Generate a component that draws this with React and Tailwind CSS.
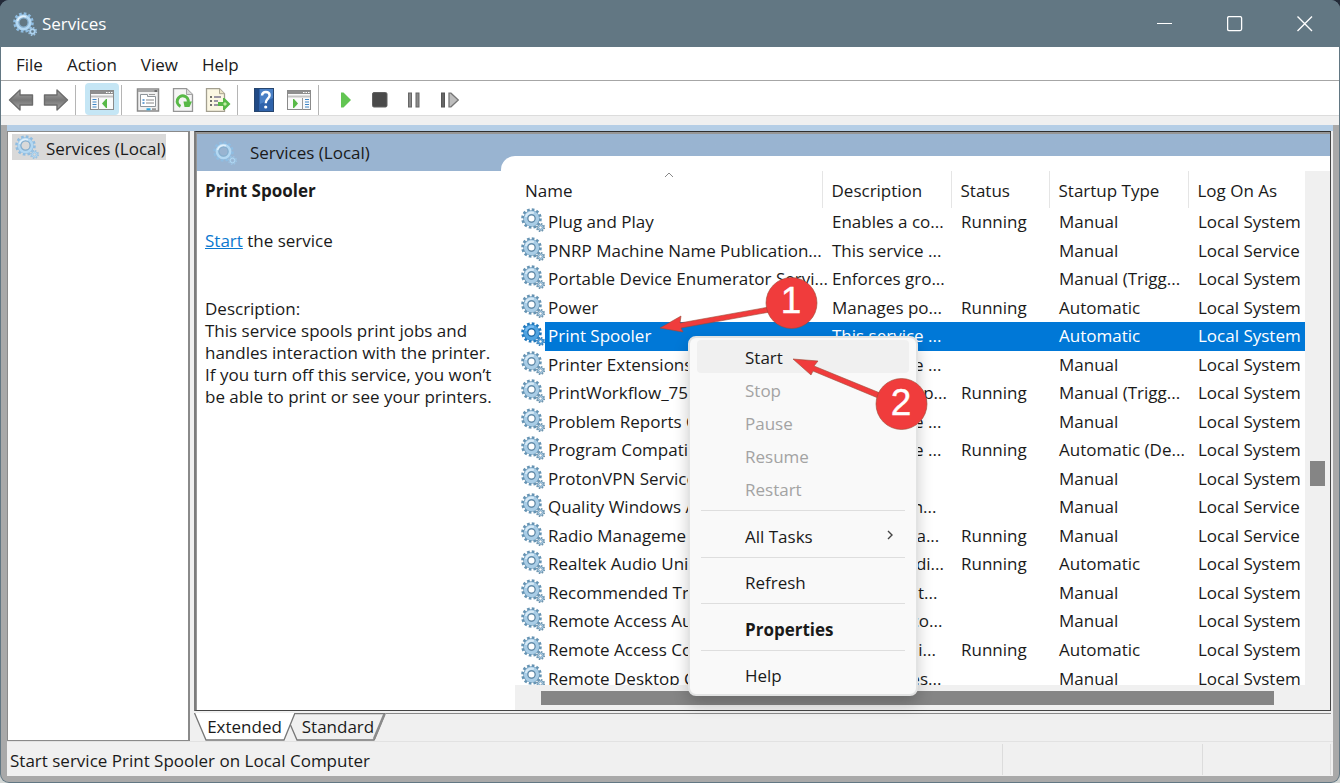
import React from 'react';

const SERVICES = [
  { name: 'Plug and Play', description: 'Enables a co...', status: 'Running', startup: 'Manual', logon: 'Local System' },
  { name: 'PNRP Machine Name Publication...', description: 'This service ...', status: '', startup: 'Manual', logon: 'Local Service' },
  { name: 'Portable Device Enumerator Servi...', description: 'Enforces gro...', status: '', startup: 'Manual (Trigg...', logon: 'Local System' },
  { name: 'Power', description: 'Manages po...', status: 'Running', startup: 'Automatic', logon: 'Local System' },
  { name: 'Print Spooler', description: 'This service ...', status: '', startup: 'Automatic', logon: 'Local System', selected: true },
  { name: 'Printer Extensions', description: 'This service ...', status: '', startup: 'Manual', logon: 'Local System' },
  { name: 'PrintWorkflow_756', description: 'Provides sup...', status: 'Running', startup: 'Manual (Trigg...', logon: 'Local System' },
  { name: 'Problem Reports C', description: 'This service ...', status: '', startup: 'Manual', logon: 'Local System' },
  { name: 'Program Compatib', description: 'This service ...', status: 'Running', startup: 'Automatic (De...', logon: 'Local System' },
  { name: 'ProtonVPN Service', description: '', status: '', startup: 'Manual', logon: 'Local System' },
  { name: 'Quality Windows A', description: 'Quality Win...', status: '', startup: 'Manual', logon: 'Local Service' },
  { name: 'Radio Manageme', description: 'Radio Mana...', status: 'Running', startup: 'Manual', logon: 'Local Service' },
  { name: 'Realtek Audio Uni', description: 'Realtek Audi...', status: 'Running', startup: 'Automatic', logon: 'Local System' },
  { name: 'Recommended Tro', description: 'Enables aut...', status: '', startup: 'Manual', logon: 'Local System' },
  { name: 'Remote Access Au', description: 'Creates a co...', status: '', startup: 'Manual', logon: 'Local System' },
  { name: 'Remote Access Co', description: 'Manages di...', status: 'Running', startup: 'Automatic', logon: 'Local System' },
  { name: 'Remote Desktop C', description: 'Remote Des...', status: '', startup: 'Manual', logon: 'Local System' },
];

const MENU_ITEMS = [
  { label: 'Start', active: true },
  { label: 'Stop', disabled: true },
  { label: 'Pause', disabled: true },
  { label: 'Resume', disabled: true },
  { label: 'Restart', disabled: true },
  { separator: true },
  { label: 'All Tasks', submenu: true },
  { separator: true },
  { label: 'Refresh' },
  { separator: true },
  { label: 'Properties', bold: true },
  { separator: true },
  { label: 'Help' },
];

// Large gear with a small one at its lower right
const Gears = ({ variant = 'list' }) => {
  const tones = {
    list: { edge: '#6593b3', fill: '#a9cde6', light: '#d8eaf6', ring: '#5f88a6', small: '#6f96b0', hole: '#ffffff' },
    light: { edge: '#8fbde2', fill: '#b4d8f2', light: '#e0f0fb', ring: '#86aecd', small: '#9cc3e2', hole: 'none' },
    selected: { edge: '#1f78bd', fill: '#4fa3e0', light: '#7bbcf0', ring: '#1f6ba8', small: '#3a83bd', hole: '#ffffff' },
  };
  const t = tones[variant];
  const list = variant !== 'light';
  return (
    <svg width="24" height="24" viewBox="0 0 24 24" fill="none" className="shrink-0" aria-hidden="true">
      <circle cx="10.5" cy="10.5" r="8.9" stroke={t.edge} strokeWidth="2.8" strokeDasharray="2.6 2.06" />
      <circle cx="10.5" cy="10.5" r={list ? 5.8 : 6.4} stroke={t.edge} strokeWidth={list ? 5 : 3.8} />
      <circle cx="10.5" cy="10.5" r={list ? 5.8 : 6.4} stroke={t.fill} strokeWidth={list ? 3.8 : 2.8} />
      <path d="M4.800 9a6 6 0 0 1 8-4" stroke={t.light} strokeWidth="2.2" />
      <circle cx="10.5" cy="10.5" r={list ? 3.6 : 4.6} stroke={t.ring} strokeWidth="1.2" fill={t.hole} />
      <circle cx="19.5" cy="19.5" r="3.7" stroke={t.small} strokeWidth="1.8" strokeDasharray="1.5 1.4" />
      <circle cx="19.5" cy="19.5" r="2.3" stroke={t.small} strokeWidth="2" />
      <circle cx="19.5" cy="19.5" r="2.3" stroke={t.fill} strokeWidth="0.9" />
    </svg>
  );
};

const ArrowIcon = ({ forward }) => (
  <svg width="26" height="24" viewBox="0 0 26 24" aria-hidden="true">
    <defs>
      <linearGradient id={forward ? 'fwd' : 'back'} x1="0" y1="0" x2="0" y2="1">
        <stop offset="0" stopColor="#a8a8a8" />
        <stop offset="0.5" stopColor="#777" />
        <stop offset="1" stopColor="#a8a8a8" />
      </linearGradient>
    </defs>
    <path
      d={forward ? 'M24.500 12 14 2v5H1.500v10H14v5z' : 'M1.500 12 12 2v5h12.500v10H12v5z'}
      fill={forward ? 'url(#fwd)' : 'url(#back)'}
      stroke="#6c6c6c"
      strokeWidth="1.4"
      strokeLinejoin="round"
    />
  </svg>
);

// Console window with a tree column; flipped for the action pane button
const PaneIcon = ({ right }) => (
  <svg width="24" height="20" viewBox="0 0 24 20" aria-hidden="true">
    <rect x="0.5" y="0.5" width="23" height="19" fill="#fafafa" stroke="#8a8a8a" />
    <rect x="1" y="1" width="22" height="3" fill="#8f8f8f" />
    <path d="M16 2.500h1.500M18.500 2.500H20M21 2.500h1.500" stroke="#fff" />
    <path d="M1 6.500h22" stroke="#c4c4c4" strokeWidth="2" />
    <path d={right ? 'M15.500 8v12' : 'M8.500 8v12'} stroke="#9a9a9a" />
    <path
      d={right ? 'M18 9.500h4M18 12h4M18 14.500h4M18 17h4' : 'M2.500 9.500h4M2.500 12h4M2.500 14.500h4M2.500 17h4'}
      stroke="#3f86c6"
      strokeWidth="1.2"
    />
    <path d={right ? 'M6 9v9h1l4-4.500L7 9z' : 'M17 9v9h-1l-4-4.500L16 9z'} fill="#58b947" />
  </svg>
);

const PropertiesIcon = () => (
  <svg width="24" height="24" viewBox="0 0 24 24" aria-hidden="true">
    <rect x="1.500" y="1" width="21" height="22" fill="#f1f1f1" stroke="#8a8a8a" strokeWidth="1.5" />
    <path d="M2 3h20" stroke="#a6a6a6" strokeWidth="2" />
    <path d="M18.500 3H21" stroke="#333" />
    <path d="M4.500 6.500h7v2h8v10h-15z" fill="#fff" stroke="#8f959a" />
    <path d="M13 6.500h6" stroke="#9a9a9a" />
    <path d="M6.500 12h2M6.500 15h2" stroke="#3f86c6" strokeWidth="1.5" />
    <path d="M10 12h8M10 15h8" stroke="#888" />
    <path d="M10.500 21.200h4" stroke="#30a8e0" strokeWidth="2" />
    <path d="M16 21.200h4" stroke="#999" strokeWidth="2" />
  </svg>
);

const RefreshIcon = () => (
  <svg width="24" height="24" viewBox="0 0 24 24" aria-hidden="true">
    <path d="M2.500 .700h13l6 5.800V23.300h-19z" fill="#f5f5f5" stroke="#969696" strokeWidth="1.3" />
    <path d="M15.500 .700v5.800h6" fill="#dcdcdc" stroke="#a6a6a6" />
    <path d="M9.500 18.300A5.500 5.500 0 1 1 17.200 14" fill="none" stroke="#58b947" strokeWidth="3" />
    <path d="M12.500 13.500h8.500L18.500 19h-5z" fill="#58b947" />
  </svg>
);

const ExportIcon = () => (
  <svg width="26" height="24" viewBox="0 0 26 24" aria-hidden="true">
    <path d="M1.500 .700h13l5 5V23.300h-18z" fill="#fbf7e3" stroke="#a39f90" strokeWidth="1.3" />
    <path d="M14.500 .700v5h5" fill="#ece5c6" stroke="#aaa591" />
    <path d="M5 9h2M5 13h2M5 17h2" stroke="#444" strokeWidth="1.6" />
    <path d="M9 9h7M9 13h4M9 17h5" stroke="#7c7790" strokeWidth="1.3" />
    <path d="M13 14h5v-4h1.500l6 6-6 6H18v-4h-5z" fill="#58b947" />
    <path d="m18 16 2-2 2 2-2 2z" fill="#c4eda6" />
  </svg>
);

const HelpIcon = () => (
  <svg width="20" height="24" viewBox="0 0 20 24" aria-hidden="true">
    <rect x="0.5" y="0.5" width="19" height="23" fill="#2f63ab" stroke="#27466f" />
    <path d="M1 1h4v22H1z" fill="#204a86" />
    <path d="M6 1h13v9L6 16z" fill="#4a80c6" />
    <path d="M8 7.500c.200-2.300 1.600-3.500 3.800-3.500 2.300 0 3.800 1.200 3.800 3.300 0 3.500-3.900 3.400-3.900 8" fill="none" stroke="#fff" strokeWidth="2.4" />
    <circle cx="11.7" cy="19" r="1.6" fill="#fff" />
  </svg>
);

const PlayIcon = () => (
  <svg width="14" height="18" viewBox="0 0 14 18" aria-hidden="true">
    <path d="M3 1.500h2.500L13 9l-7.500 7.500H3z" fill="#62c552" />
  </svg>
);

const StopIcon = () => (
  <svg width="16" height="16" viewBox="0 0 16 16" aria-hidden="true">
    <rect x="0.5" y="0.5" width="14.500" height="14.500" rx="1.5" fill="#4a4a4a" stroke="#626262" />
  </svg>
);

const PauseIcon = () => (
  <svg width="16" height="16" viewBox="0 0 16 16" aria-hidden="true">
    <rect x="1.500" y="1" width="3" height="14" fill="#8a8a8a" stroke="#666" />
    <rect x="9" y="1" width="3" height="14" fill="#8a8a8a" stroke="#666" />
  </svg>
);

const RestartIcon = () => (
  <svg width="20" height="16" viewBox="0 0 20 16" aria-hidden="true">
    <rect x="1.500" y="1" width="3" height="14" fill="#666" stroke="#555" />
    <path d="M9 1.200h2L18.300 8 11 14.800H9z" fill="#bdbdbd" stroke="#777" strokeWidth="1.3" />
  </svg>
);

const ToolButton = ({ label, active, children }) => (
  <button
    type="button"
    aria-label={label}
    className={`flex h-8 w-[34px] items-center justify-center rounded-sm pt-px ${active ? 'bg-[#c5e6f5]' : ''}`}
  >
    {children}
  </button>
);

const ToolSeparator = () => <div className="mr-[8px] ml-px h-[30px] w-px bg-[#b5b5b5]" />;

const TitleBar = () => (
  <header className="flex h-[47px] shrink-0 items-center justify-between bg-[#627783] pl-[13px] text-white">
    <div className="flex items-center gap-[5px]">
      <Gears variant="light" />
      <h1>Services</h1>
    </div>
    <div className="flex h-full">
      <button type="button" aria-label="Minimize" className="flex w-[70px] items-center justify-center">
        <svg width="16" height="16" fill="none" stroke="white"><path d="M0 7.500h15" /></svg>
      </button>
      <button type="button" aria-label="Maximize" className="flex w-[70px] items-center justify-center">
        <svg width="16" height="16" fill="none" stroke="white"><rect x="0.6" y="0.6" width="14" height="14" rx="1.5" strokeWidth="1.3" /></svg>
      </button>
      <button type="button" aria-label="Close" className="flex w-[70px] items-center justify-center">
        <svg width="16" height="16" fill="none" stroke="white" strokeWidth="1.4"><path d="m.500 .500 14.500 14.500M15 .500.500 15" /></svg>
      </button>
    </div>
  </header>
);

const MenuBar = () => (
  <nav className="flex h-[34px] shrink-0 items-center gap-6 border-b border-[#a6a6a6] bg-white px-[15px] pt-[2px]">
    {['File', 'Action', 'View', 'Help'].map((item) => (
      <button key={item} type="button">{item}</button>
    ))}
  </nav>
);

const Toolbar = () => (
  <div className="flex h-[35px] shrink-0 items-end gap-px border-b border-[#dcdcdc] bg-white pl-[3px]">
    <ToolButton label="Back"><ArrowIcon /></ToolButton>
    <ToolButton label="Forward"><ArrowIcon forward /></ToolButton>
    <ToolSeparator />
    <ToolButton label="Show/Hide Console Tree" active><PaneIcon /></ToolButton>
    <ToolSeparator />
    <ToolButton label="Properties"><PropertiesIcon /></ToolButton>
    <ToolButton label="Refresh"><RefreshIcon /></ToolButton>
    <ToolButton label="Export List"><ExportIcon /></ToolButton>
    <ToolSeparator />
    <ToolButton label="Help"><HelpIcon /></ToolButton>
    <ToolButton label="Show/Hide Action Pane"><PaneIcon right /></ToolButton>
    <ToolSeparator />
    <ToolButton label="Start Service"><PlayIcon /></ToolButton>
    <ToolButton label="Stop Service"><StopIcon /></ToolButton>
    <ToolButton label="Pause Service"><PauseIcon /></ToolButton>
    <ToolButton label="Restart Service"><RestartIcon /></ToolButton>
  </div>
);

const ConsoleTree = () => (
  <aside className="w-[183px] shrink-0 border border-r-2 border-[#8a8a8a] bg-white pt-[2px] pl-1">
    <button type="button" className="flex h-[26px] w-[154px] items-center gap-[7px] bg-[#d9d9d9] pl-[3px] whitespace-nowrap">
      <Gears variant="light" />
      <span className="pt-[3px]">Services (Local)</span>
    </button>
  </aside>
);

const DetailPanel = () => (
  <section className="flex w-[304px] shrink-0 flex-col">
    <div className="flex h-[37px] items-center gap-[13px] bg-[#99b4d1] pl-4">
      <Gears variant="light" />
      <h2>Services (Local)</h2>
    </div>
    <div className="flex-1 bg-white pt-[9px] pl-2 leading-[22px]">
      <h3 className="font-bold">Print Spooler</h3>
      <p className="mt-7">
        <a href="#start" className="text-[#0a78cf] underline">Start</a> the service
      </p>
      <p className="mt-[46px]">Description:</p>
      <p className="whitespace-nowrap">
        This service spools print jobs and<br />
        handles interaction with the printer.<br />
        If you turn off this service, you won’t<br />
        be able to print or see your printers.
      </p>
    </div>
  </section>
);

const ServiceRow = ({ service }) => {
  const cell = service.selected ? 'bg-[#0078d7] text-white' : '';
  return (
    <tr>
      <td className="h-[28px] p-0">
        <div className="flex h-full items-start pl-[6px]">
          <Gears variant={service.selected ? 'selected' : 'list'} />
          <span className={`flex h-full flex-1 items-center pl-[3px] ${cell}`}>{service.name}</span>
        </div>
      </td>
      <td className={`p-0 pl-[10px] ${cell}`}>{service.description}</td>
      <td className={`p-0 pl-[10px] ${cell}`}>{service.status}</td>
      <td className={`p-0 pl-[10px] ${cell}`}>{service.startup}</td>
      <td className={`p-0 pl-[10px] ${cell}`}>{service.logon}</td>
    </tr>
  );
};

const ServiceTable = () => (
  <div className="min-w-0 flex-1 overflow-hidden">
    <table className="h-[522px] w-full table-fixed border-collapse text-left whitespace-nowrap">
      <colgroup>
        <col />
        <col className="w-[129px]" />
        <col className="w-[98px]" />
        <col className="w-[139px]" />
        <col className="w-[117px]" />
      </colgroup>
      <thead>
        <tr>
          <th className="relative h-[37px] border-r border-[#e5e5e5] p-0 pt-[2px] pl-[10px] font-normal">
            Name
            <svg width="10" height="6" className="absolute top-px left-[149px]" fill="none" stroke="#888">
              <path d="m1 5 4-4 4 4" />
            </svg>
          </th>
          <th className="border-r border-[#e5e5e5] p-0 pt-[2px] pl-[9px] font-normal">Description</th>
          <th className="border-r border-[#e5e5e5] p-0 pt-[2px] pl-[9px] font-normal">Status</th>
          <th className="border-r border-[#e5e5e5] p-0 pt-[2px] pl-[9px] font-normal">Startup Type</th>
          <th className="p-0 pt-[2px] pl-[9px] font-normal">Log On As</th>
        </tr>
      </thead>
      <tbody>
        {SERVICES.map((service) => (
          <ServiceRow key={service.name} service={service} />
        ))}
      </tbody>
    </table>
  </div>
);

const ResultPane = () => (
  <div className="flex min-h-0 flex-1 border border-l-2 border-[#444] border-t-[#2f2f2f] border-l-[#7c7c7c]">
    <div className="flex min-w-0 flex-1 border-t-2 border-l border-[#969696]">
      <DetailPanel />
      <div className="flex min-w-0 flex-1 flex-col bg-linear-to-b from-[#99b4d1] from-50% to-white to-50% pt-[22px]">
        <div className="flex min-h-0 flex-1 flex-col rounded-tl-[14px] bg-white pt-[15px] pl-[14px]">
          <div className="flex min-h-0 flex-1">
            <ServiceTable />
            <div className="flex w-[25px] shrink-0 flex-col items-center bg-[#f0f0f0] pt-[290px]">
              <div className="h-[25px] w-[15px] bg-[#858585]" />
            </div>
          </div>
          <div className="flex h-[25px] shrink-0 items-center bg-[#f0f0f0] pr-[56px] pl-[26px]">
            <div className="h-[14px] flex-1 bg-[#858585]" />
          </div>
        </div>
      </div>
    </div>
  </div>
);

const ViewTabs = () => (
  <div className="mt-[2px] flex h-[28px] shrink-0">
    <button type="button" className="relative z-10 w-[101px]">
      <svg viewBox="0 0 101 28" className="absolute inset-0 size-full" aria-hidden="true">
        <path d="M.500 0 12 27h78l11-27" fill="#fff" stroke="#777" strokeWidth="1.3" />
      </svg>
      <span className="relative">Extended</span>
    </button>
    <button type="button" className="relative -ml-[5px] w-[96px]">
      <svg viewBox="0 0 96 28" className="absolute inset-0 size-full" aria-hidden="true">
        <path d="M5 .500h90L84 27H7L.500 12" fill="#f0f0f0" stroke="#777" strokeWidth="1.3" />
        <path d="M94.500 1 84 26" stroke="#8a8a8a" strokeWidth="2.5" />
      </svg>
      <span className="relative">Standard</span>
    </button>
    <div className="flex-1 border-t border-[#8a8a8a]" />
  </div>
);

const StatusBar = () => (
  <footer className="flex h-[35px] shrink-0 items-center border-t border-[#e2e2e2] bg-[#f0f0f0] pl-[3px]">
    <p className="flex-1 pt-[3px]">Start service Print Spooler on Local Computer</p>
    <div className="h-[31px] w-[200px] border-l border-[#dcdcdc]" />
    <div className="mr-[2px] h-[31px] w-[129px] border-x border-[#dcdcdc]" />
  </footer>
);

const ContextMenu = () => (
  <div
    role="menu"
    className="absolute top-[336px] left-[688px] flex h-[360px] w-[230px] flex-col rounded-lg border-2 border-[#e2e3e3] bg-[#f9f9f9] px-[7px] pt-[2px] pb-[3px] shadow-[0_8px_16px_rgba(0,0,0,0.2)]"
  >
    {MENU_ITEMS.map((item, index) =>
      item.separator ? (
        <div key={index} className="mx-1 flex-1 pt-[5px]">
          <div className="h-px bg-[#dedede]" />
        </div>
      ) : (
        <button
          key={item.label}
          type="button"
          role="menuitem"
          disabled={item.disabled}
          className={`flex h-[33px] shrink-0 items-center justify-between rounded-sm pt-[3px] pr-[15px] pl-12 ${
            item.active ? 'bg-[#f0f0f0]' : ''
          } ${item.disabled ? 'text-[#a3a3a3]' : ''} ${item.bold ? 'font-bold' : ''}`}
        >
          {item.label}
          {item.submenu && (
            <svg width="8" height="14" fill="none" stroke="#444" strokeWidth="1.4" aria-hidden="true">
              <path d="m2 1 4 4-4 4" />
            </svg>
          )}
        </button>
      )
    )}
  </div>
);

// Numbered step markers with arrows pointing at the row and the menu item
const StepMarkers = () => (
  <svg
    width="270"
    height="158"
    viewBox="658 275 270 158"
    className="pointer-events-none absolute top-[275px] left-[658px] font-['Liberation_Sans',sans-serif]"
    fontSize="37"
    textAnchor="middle"
  >
    <g fill="#f03c3c" stroke="#9c4a35" strokeWidth="0.6">
      <path d="m660 328 21-12-1 7 89-16 1 5-89 16 2 4z" />
      <path d="m793 359 25 2-4 5 66 27-2 5-65-27-2 4z" />
      <circle cx="791.5" cy="303" r="25.5" />
      <circle cx="901.5" cy="404" r="25.5" />
    </g>
    <g fill="#fff" stroke="#fff" strokeWidth="0.4">
      <text x="791" y="313">1</text>
      <text x="901" y="415">2</text>
    </g>
  </svg>
);

const App = () => (
  <div className="min-h-screen bg-linear-to-b from-[#232a38] to-[#d4d8d6] font-['Open_Sans','Noto_Sans',sans-serif] text-[17px] leading-6 text-[#1a1a1a]">
    <div className="relative flex h-screen min-h-[700px] flex-col overflow-hidden rounded-[9px] bg-[#627783]">
      <TitleBar />
      <div className="mx-px mb-px flex min-h-0 flex-1 flex-col overflow-hidden rounded-b-lg bg-[#a9a9a9]">
        <MenuBar />
        <Toolbar />
        <div className="h-[9px] shrink-0 bg-[#f0f0f0]" />
        <div className="mx-[6px] mb-[6px] flex min-h-0 flex-1 flex-col bg-[#f0f0f0]">
          <div className="h-[6px] shrink-0 bg-[#b5cee6]" />
          <main className="flex min-h-0 flex-1 gap-1">
            <ConsoleTree />
            <div className="flex min-w-0 flex-1 flex-col pr-[2px]">
              <ResultPane />
              <ViewTabs />
            </div>
          </main>
          <StatusBar />
        </div>
      </div>
      <ContextMenu />
      <StepMarkers />
    </div>
  </div>
);

export default App;
